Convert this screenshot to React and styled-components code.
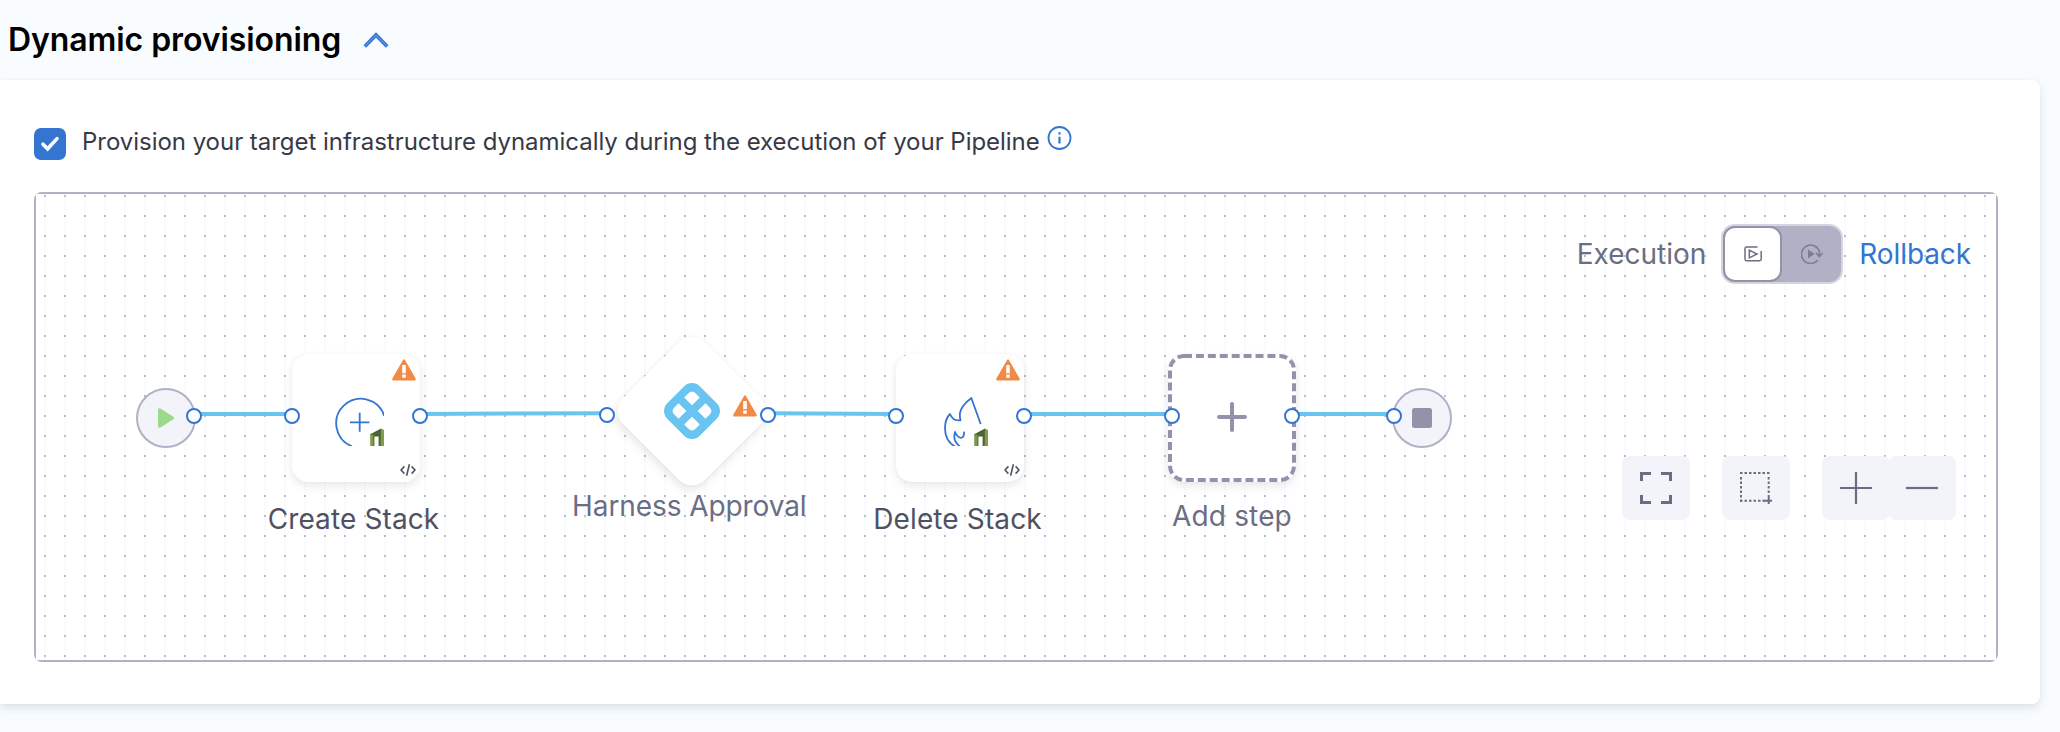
import React from 'react';
import styled, { createGlobalStyle } from 'styled-components';

const c = {
  page: '#f8fcff',
  blue: '#3375d1',
  sky: '#69c4f1',
  grey400: '#9293ab',
  grey300: '#b0b1c4',
  grey500: '#6b6d85',
  grey700: '#4f5162',
  grey50: '#f3f3fa',
  orange: '#f08a45',
};

const Global = createGlobalStyle`
  * { box-sizing: border-box; }
  body { margin: 0; background: ${c.page}; font-family: Inter, sans-serif; overflow: hidden; }
`;

const Page = styled.main`
  width: 2060px;
  height: 732px;
  display: flex;
  flex-direction: column;
`;

const Header = styled.header`
  height: 80px;
  flex: none;
  display: flex;
  align-items: center;
  padding-left: 8px;
  gap: 22px;
`;

const Title = styled.h2`
  margin: 0;
  font-size: 32px;
  line-height: 40px;
  font-weight: 600;
  letter-spacing: -0.08px;
  color: #000;
  white-space: nowrap;
`;

const Card = styled.section`
  width: 2040px;
  height: 624px;
  padding: 48px 42px 42px 34px;
  background: #fff;
  border-radius: 0 8px 8px 0;
  box-shadow: 0 4px 8px rgba(96, 97, 112, 0.16), 0 0 2px rgba(40, 41, 61, 0.06);
`;

const OptionRow = styled.label`
  height: 64px;
  display: flex;
  align-items: flex-start;
`;

const Checkbox = styled.span`
  width: 32px;
  height: 32px;
  border-radius: 7px;
  background: ${c.blue};
  display: grid;
  place-items: center;
`;

const OptionText = styled.span`
  margin: -2px 7px 0 16px;
  font-size: 24px;
  line-height: 32px;
  letter-spacing: -0.035px;
  color: #383946;
  white-space: nowrap;
`;

const InfoIcon = styled.svg`
  margin-top: -2px;
`;

const CanvasFrame = styled.div`
  width: 1964px;
  height: 470px;
  border: 2px solid ${c.grey300};
  border-radius: 8px;
`;

const Canvas = styled.div`
  position: relative;
  width: 1960px;
  height: 466px;
  background-color: #fff;
  background-image:
    linear-gradient(90deg, transparent 2px, #fff 2px),
    linear-gradient(#b7bfc6 2px, ${c.page} 2px);
  background-size: 20px 20px;
  background-position: 8px 1px;
`;

const ModeBar = styled.div`
  position: absolute;
  top: 30px;
  right: 25px;
  height: 60px;
  display: flex;
  align-items: center;
`;

const ModeLabel = styled.span`
  font-size: 28px;
  line-height: 36px;
  letter-spacing: ${(p) => (p.$active ? -0.1 : 0)}px;
  color: ${(p) => (p.$active ? c.blue : c.grey500)};
`;

const Toggle = styled.div`
  width: 122px;
  height: 60px;
  margin: 0 16px 0 15px;
  border: 2px solid #d5d5e0;
  border-radius: 14px;
  background: ${c.grey300};
  display: flex;
`;

const ToggleOption = styled.span`
  width: 60px;
  height: 56px;
  border-radius: 12px;
  border: 2px solid ${(p) => (p.$on ? c.grey400 : 'transparent')};
  background: ${(p) => (p.$on ? '#fff' : 'transparent')};
  display: grid;
  place-items: center;
`;

const Links = styled.svg`
  position: absolute;
  inset: 0;
`;

const Node = styled.div`
  position: absolute;
  left: ${(p) => p.$x - 36}px;
  top: ${(p) => p.$y - 194}px;
  width: ${(p) => p.$size}px;
  height: ${(p) => p.$size}px;
  display: grid;
  place-items: center;
`;

const Terminal = styled(Node)`
  border: 2px solid ${c.grey300};
  border-radius: 50%;
  background: ${c.grey50};
`;

const StepNode = styled(Node)`
  border-radius: 16px;
  background: #fff;
  box-shadow: 0 4px 8px rgba(96, 97, 112, 0.14), 0 0 2px rgba(40, 41, 61, 0.05);
`;

const DiamondNode = styled(Node)`
  &::before {
    content: '';
    position: absolute;
    inset: 0;
    border-radius: 18px;
    background: #fff;
    transform: rotate(45deg);
    box-shadow: 2px 4px 8px rgba(96, 97, 112, 0.15), 0 0 2px rgba(40, 41, 61, 0.06);
  }
`;

const Corner = styled.svg`
  position: absolute;
  left: ${(p) => p.$x}px;
  top: ${(p) => p.$y}px;
`;

const Glyph = styled.svg`
  position: relative;
  overflow: ${(p) => (p.$clip ? 'hidden' : 'visible')};
  display: block;
`;

const StepGlyph = styled(Glyph)`
  margin: 7px 0 0 7px;
`;

const NodeLabel = styled.span`
  position: absolute;
  left: calc(50% + ${(p) => p.$shift || 0}px);
  top: ${(p) => p.$top}px;
  transform: translateX(-50%);
  font-size: 28px;
  line-height: 36px;
  letter-spacing: ${(p) => p.$track || 0}px;
  white-space: nowrap;
  color: ${(p) => (p.$strong ? c.grey700 : c.grey500)};
`;

const Port = styled.i`
  position: absolute;
  left: ${(p) => p.$x - 44}px;
  top: ${(p) => p.$y - 202}px;
  width: 16px;
  height: 16px;
  border: 2px solid ${c.blue};
  border-radius: 50%;
  background: #fff;
`;

const ZoomBar = styled.div`
  position: absolute;
  right: 40px;
  bottom: 140px;
  display: flex;
  gap: 32px;
`;

const ToolButton = styled.button`
  width: 68px;
  height: 64px;
  padding: 0;
  border: 0;
  border-radius: 8px;
  background: ${c.grey50};
  display: grid;
  place-items: center;
`;

const ZoomPair = styled.div`
  display: flex;
  ${ToolButton} + ${ToolButton} { margin-left: -2px; }
`;

const Warning = ({ x, y }) => (
  <Corner $x={x} $y={y} width="24" height="22" viewBox="0 0 24 22">
    <path d="M11 1.1Q12 -.5 13 1.1L23.6 19.6Q24.4 21.6 22.4 21.6H1.6Q-.4 21.6 .4 19.6Z" fill={c.orange} />
    <path d="M10.2 6h3.6v8.2h-3.6zM10.2 15.6h3.6v3.2h-3.6z" fill="#fff" />
  </Corner>
);

const CodeMark = () => (
  <Corner $x={108} $y={109} width="16" height="14" viewBox="0 0 16 14" fill="none" stroke="#4b5563" strokeWidth="1.6">
    <path d="M4.4 3.4 1 7l3.4 3.6M11.6 3.4 15 7l-3.4 3.6M9.4 1.2 6.6 12.8" />
  </Corner>
);

const StackMark = () => (
  <g>
    <path d="M35.2 37.2 46 31.6V49H43.6V39.6H39.4V49H38V38.2H35.2Z" fill="#4f6332" />
    <path d="M46 31.6 49 33V49H45.6Z" fill="#7f9c4a" />
    <path d="M35.2 37.6H38.4V49H35.2Z" fill="#7f9c4a" />
  </g>
);

const steps = [
  { x: 292, label: 'Create Stack', kind: 'create' },
  { x: 896, label: 'Delete Stack', kind: 'delete' },
];

const ports = [[194, 416], [292, 416], [420, 416], [607.3, 415], [768.3, 415], [896, 416], [1024, 416], [1172, 416], [1292, 416], [1394, 416]];

const links = [[194, 414, 292, 414], [420, 414, 607, 413.2], [768, 413.2, 896, 414], [1024, 414, 1172, 414], [1292, 414, 1394, 414]];

export default function App() {
  return (
    <Page>
      <Global />
      <Header>
        <Title>Dynamic provisioning</Title>
        <svg width="26" height="18" viewBox="0 0 26 18" fill="none">
          <path d="M1.8 15.5 13 4 24.2 15.5" stroke={c.blue} strokeWidth="3.8" />
          <path d="M2.3 15 13 4 23.7 15" stroke="#8fb3e6" strokeWidth="0.7" />
        </svg>
      </Header>
      <Card>
        <OptionRow>
          <Checkbox>
            <svg width="20" height="18" viewBox="0 0 20 18" fill="none">
              <path d="M3 9.2 7.6 13.8 17 3.6" stroke="#fff" strokeWidth="3.6" strokeLinecap="round" />
            </svg>
          </Checkbox>
          <OptionText>Provision your target infrastructure dynamically during the execution of your Pipeline</OptionText>
          <InfoIcon width="25" height="24" viewBox="0 0 25 24" fill="none">
            <circle cx="12.5" cy="12" r="11" stroke={c.blue} strokeWidth="1.8" />
            <path d="M12.5 10.8v6.6M12.5 6.2v2.4" stroke={c.blue} strokeWidth="2.2" />
          </InfoIcon>
        </OptionRow>
        <CanvasFrame>
          <Canvas>
            <ModeBar>
              <ModeLabel>Execution</ModeLabel>
              <Toggle>
                <ToggleOption $on>
                  <svg width="18" height="16" viewBox="0 0 18 16" fill="none" stroke={c.grey500} strokeWidth="1.5">
                    <path d="M13.500 1H2.500Q1 1 1 2.500V13Q1 14.700 2.500 14.700H15.500Q17.200 14.700 17.200 13V5M5.300 4.200V11.800L13 8Z" />
                  </svg>
                </ToggleOption>
                <ToggleOption>
                  <svg width="22" height="20" viewBox="0 0 22 20" fill="none" stroke="#7c7d96" strokeWidth="1.6">
                    <path d="M16.8 16A9.200 9.200 0 1 1 18.400 7.500V12.500M15 9 18.400 12.500 21.700 9" />
                    <path d="M7 5.5V14.5L13.5 10Z" fill="#7c7d96" stroke="none" />
                  </svg>
                </ToggleOption>
              </Toggle>
              <ModeLabel $active>Rollback</ModeLabel>
            </ModeBar>

            <Links width="1960" height="466" viewBox="36 194 1960 466" stroke={c.sky} strokeWidth="4">
              {links.map(([x1, y1, x2, y2]) => <line key={x1} x1={x1} y1={y1} x2={x2} y2={y2} />)}
            </Links>

            <Terminal $x={136} $y={388} $size={60}>
              <svg width="18" height="20" viewBox="0 0 18 20"><path d="M1 2Q1 -.6 3.4.6L16 8.6Q18 10 16 11.4L3.4 19.4Q1 20.6 1 18Z" fill="#9bd98b" /></svg>
            </Terminal>

            {steps.map((s) => (
              <StepNode key={s.x} $x={s.x} $y={354} $size={128}>
                <StepGlyph $clip width="49" height="49" viewBox="0 0 49 49" fill="none">
                  {s.kind === 'create' ? (
                    <g stroke={c.blue} strokeWidth="1.8">
                      <path d="M49.300 19A24.600 24.600 0 1 0 17 49.300" />
                      <path d="M24.700 15.700v19M15 25.300h19.400" />
                    </g>
                  ) : (
                    <path
                      stroke={c.blue}
                      strokeWidth="1.8"
                      strokeLinejoin="round"
                      d="M41.700 27 32.300 1Q22 9 21 16Q20.500 20 21.500 23.300Q14 24.500 11 17Q6 22 6 31Q6 44 16 49.500M21 49.500Q15 45 15.300 39L16 35Q18 40 22 41Q25.500 40 25 34.700"
                    />
                  )}
                  <StackMark />
                </StepGlyph>
                <Warning x={100} y={5} />
                <CodeMark />
                <NodeLabel $top={147} $shift={-2.5} $track={0.12} $strong>{s.label}</NodeLabel>
              </StepNode>
            ))}

            <DiamondNode $x={634.3} $y={353} $size={116}>
              <Glyph width="56" height="56" viewBox="-28 -28 56 56">
                <g transform="rotate(45)">
                  <rect x="-23" y="-23" width="46" height="46" rx="11" fill={c.sky} />
                  <path d="M-4 -4H-15V-10Q-15 -15 -10 -15H-4ZM4 -4V-15H10Q15 -15 15 -10V-4ZM4 4H15V10Q15 15 10 15H4ZM-4 4V15H-10Q-15 15 -15 10V4Z" fill="#fff" />
                </g>
              </Glyph>
              <Warning x={98.5} y={42} />
              <NodeLabel $top={135} $shift={-3} $track={-0.08}>Harness Approval</NodeLabel>
            </DiamondNode>

            <StepNode $x={1168} $y={354} $size={128}>
              <Corner $x={0} $y={0} width="128" height="128" fill="none" stroke={c.grey400} strokeWidth="4">
                <rect x="2" y="2" width="124" height="124" rx="14" strokeDasharray="8 3.92" />
                <path d="M64 50v26M51 63h26" strokeLinecap="round" />
              </Corner>
              <NodeLabel $top={144} $track={0.15}>Add step</NodeLabel>
            </StepNode>

            <Terminal $x={1392} $y={388} $size={60}>
              <svg width="20" height="20"><rect width="20" height="20" rx="2.5" fill={c.grey400} /></svg>
            </Terminal>

            {ports.map(([x, y]) => <Port key={x} $x={x} $y={y} />)}

            <ZoomBar>
              <ToolButton aria-label="Fit">
                <svg width="32" height="32" fill="none" stroke={c.grey500} strokeWidth="3">
                  <path d="M1.500 9V1.500H11M21 1.500H30.500V9M30.500 23V30.500H21M11 30.500H1.500V23" />
                </svg>
              </ToolButton>
              <ToolButton aria-label="Select">
                <svg width="32" height="32" fill="none" stroke={c.grey500} strokeWidth="2">
                  <path d="M0 1H30M1 5V30M0 28.700H24M28.700 5V23" strokeDasharray="2.500 2" />
                  <path d="M23 28.700H32M28.700 23V32" />
                </svg>
              </ToolButton>
              <ZoomPair>
                <ToolButton aria-label="Zoom in">
                  <svg width="32" height="32" stroke={c.grey500} strokeWidth="2.2"><path d="M0 16H32M16 0V32" /></svg>
                </ToolButton>
                <ToolButton aria-label="Zoom out">
                  <svg width="32" height="32" stroke={c.grey500} strokeWidth="2.2"><path d="M0 16H32" /></svg>
                </ToolButton>
              </ZoomPair>
            </ZoomBar>
          </Canvas>
        </CanvasFrame>
      </Card>
    </Page>
  );
}
